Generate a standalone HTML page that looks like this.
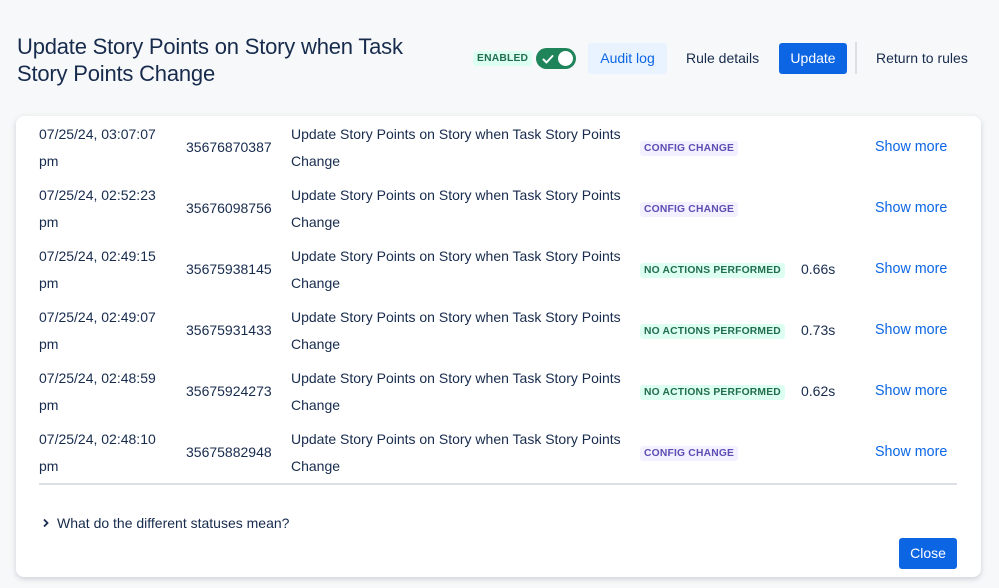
<!DOCTYPE html>
<html><head><style>
*{margin:0;padding:0;box-sizing:border-box}
body{width:999px;height:588px;background:#f7f8f9;font-family:"Liberation Sans",sans-serif;color:#172b4d;position:relative;overflow:hidden;font-size:14px}
.abs{position:absolute;white-space:nowrap}
h1{position:absolute;left:17px;top:33px;font-size:22px;line-height:27px;font-weight:500;color:#172b4d;letter-spacing:-0.2px}
.card{position:absolute;left:16px;top:116px;width:965px;height:461px;background:#fff;border-radius:8px;box-shadow:0 2px 6px rgba(9,30,66,.18)}
.lozg{background:#dcfff1;color:#216e4e;font-size:10.3px;font-weight:bold;padding:2px 4px;border-radius:3px;letter-spacing:.2px}
.lozp{background:#f3f0ff;color:#5e4db2;font-size:10.3px;font-weight:bold;padding:2px 4px;border-radius:3px;letter-spacing:.2px}
.link{color:#0c66e4;font-size:14.3px}
</style></head><body>
<h1>Update Story Points on Story when Task<br>Story Points Change</h1>
<div class="abs lozg" style="left:473px;top:51px">ENABLED</div>
<div class="abs" style="left:536px;top:48px;width:40px;height:21px;border-radius:11px;background:#1f845a">
<svg width="14" height="14" style="position:absolute;left:5px;top:4px" viewBox="0 0 14 14"><path d="M2.5 7.5l3 3 6-6.5" stroke="#fff" stroke-width="2" fill="none" stroke-linecap="round" stroke-linejoin="round"/></svg>
<div style="position:absolute;right:3px;top:3px;width:15px;height:15px;border-radius:50%;background:#fff"></div></div>
<div class="abs" style="left:588px;top:43px;width:79px;height:31px;background:#e9f2ff;border-radius:3px;color:#0c66e4;font-size:14px;line-height:31px;text-align:center">Audit log</div>
<div class="abs" style="left:686px;top:43px;line-height:31px;font-size:14px">Rule details</div>
<div class="abs" style="left:779px;top:43px;width:68px;height:31px;background:#0c66e4;border-radius:3px;color:#fff;line-height:31px;text-align:center">Update</div>
<div class="abs" style="left:855px;top:42px;width:2px;height:32px;background:#dcdfe4"></div>
<div class="abs" style="left:876px;top:43px;line-height:31px">Return to rules</div>
<div class="card"></div>
<div id="rows"></div>
<div class="abs" style="left:39px;top:483px;width:918px;height:2px;background:#dcdfe4"></div>
<svg class="abs" style="left:42px;top:518px" width="8" height="10" viewBox="0 0 8 10"><path d="M2 1.5l3.5 3.5L2 8.5" stroke="#172b4d" stroke-width="1.8" fill="none"/></svg>
<div class="abs" style="left:57px;top:514px;line-height:18px">What do the different statuses mean?</div>
<div class="abs" style="left:899px;top:538px;width:58px;height:31px;background:#0c66e4;border-radius:3px;color:#fff;line-height:31px;text-align:center">Close</div>
<script>
var d=[["03:07:07","35676870387","c",""],["02:52:23","35676098756","c",""],["02:49:15","35675938145","n","0.66s"],["02:49:07","35675931433","n","0.73s"],["02:48:59","35675924273","n","0.62s"],["02:48:10","35675882948","c",""]];
var h="";
d.forEach(function(r,i){var t=121+61*i;
h+='<div class="abs" style="left:39px;top:'+t+'px;line-height:27px">07/25/24, '+r[0]+'<br>pm</div>';
h+='<div class="abs" style="left:186px;top:'+(t+13)+'px;line-height:27px">'+r[1]+'</div>';
h+='<div class="abs" style="left:291px;top:'+t+'px;line-height:27px">Update Story Points on Story when Task Story Points<br>Change</div>';
h+=r[2]=="c"?'<div class="abs lozp" style="left:640px;top:'+(t+20)+'px">CONFIG CHANGE</div>':'<div class="abs lozg" style="left:640px;top:'+(t+20)+'px">NO ACTIONS PERFORMED</div>';
if(r[3])h+='<div class="abs" style="left:801px;top:'+(t+13)+'px;line-height:27px">'+r[3]+'</div>';
h+='<div class="abs link" style="left:875px;top:'+(t+13)+'px;line-height:27px">Show more</div>';});
document.getElementById("rows").innerHTML=h;
</script>
</body></html>
